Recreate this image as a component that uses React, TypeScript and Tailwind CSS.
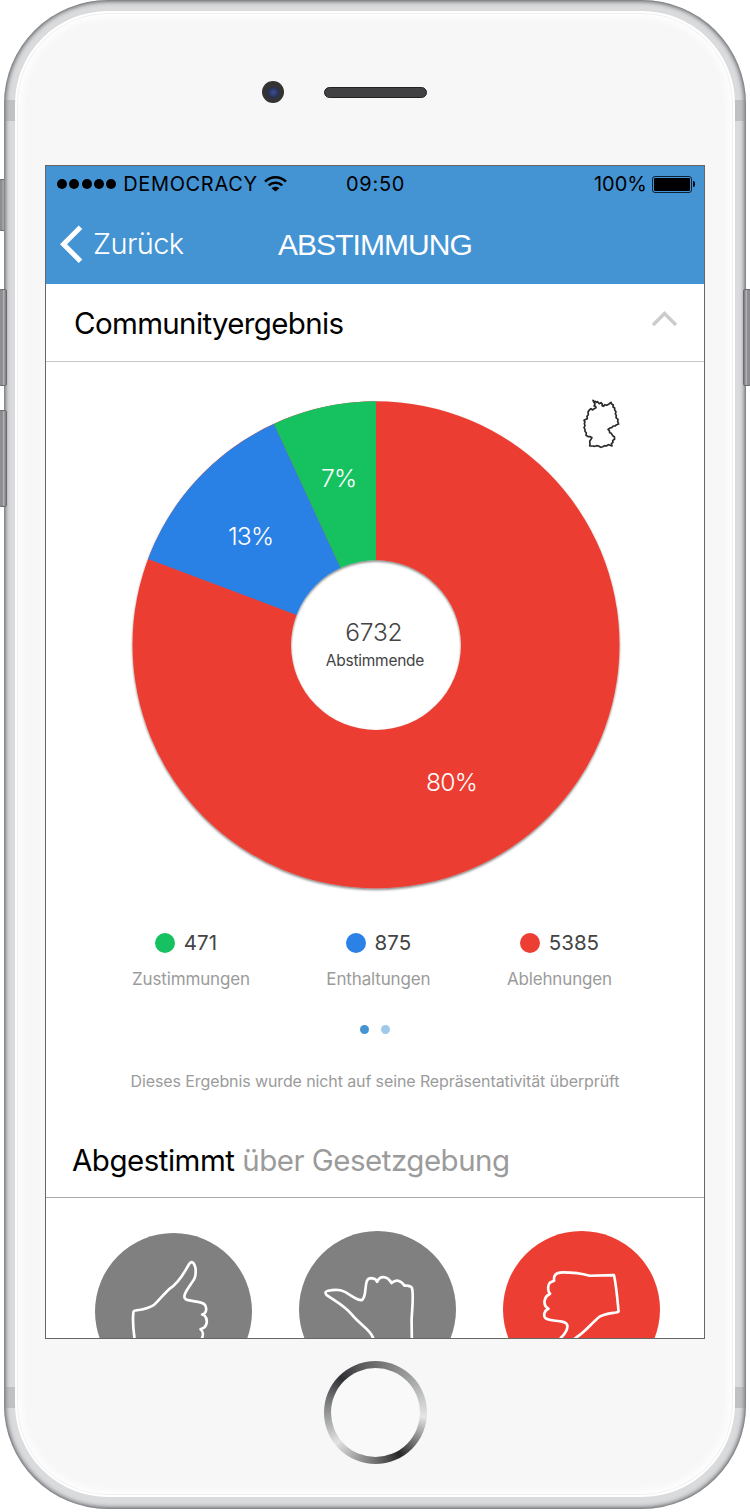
import type { ReactNode } from "react";

const GERMANY =
  "M99 62L101 67L105 65L110 68L113 66L118 72L123 69L127 73L126 78L131 80L134 75L140 77L147 73L153 68L155 73L160 76L159 82L164 85L164 91L168 96L166 102L169 108L168 114L174 119L173 126L176 133L170 135L165 139L160 139L155 144L150 145L144 149L148 153L149 159L154 161L158 168L163 171L164 178L158 183L159 188L154 192L156 199L150 197L145 195L139 199L134 198L128 201L122 203L116 199L110 198L104 200L97 199L89 199L90 192L89 185L93 179L96 174L91 171L85 171L78 167L79 160L75 155L75 149L72 144L75 138L73 131L75 127L72 122L78 119L82 117L81 110L85 105L84 97L88 91L93 87L98 91L101 88L108 84L107 80L102 79L105 73Z";

function StatusBar() {
  return (
    <div className="flex h-9 items-center pl-[11px] pr-[9px] text-[20px] leading-none text-black">
      <div className="flex w-[289px] items-center">
        <div className="flex gap-[2.3px]">
          {[0, 1, 2, 3, 4].map((i) => (
            <span key={i} className="size-[10px] rounded-full bg-black" />
          ))}
        </div>
        <span className="ml-[7px] font-[370] tracking-[0.65px]">DEMOCRACY</span>
        <svg className="ml-[6px] h-4 w-[23px]" viewBox="0 0 23 16" fill="none" stroke="#000" strokeWidth="2.5">
          <path d="M1 5.6C7 -.2 16 -.2 22 5.6" />
          <path d="M4.7 9.4C8.6 5.8 14.4 5.8 18.3 9.4" />
          <path d="M11.5 15.6L7.6 12.2C9.8 10.2 13.2 10.2 15.4 12.2Z" fill="#000" stroke="none" />
        </svg>
      </div>
      <span className="grow font-[370] tracking-[0.7px]">09:50</span>
      <span className="font-[370]">100%</span>
      <div className="ml-[5px] flex items-center">
        <div className="h-[17px] w-[40px] rounded-[3px] border border-[#0a2238] p-px">
          <div className="size-full rounded-[1px] bg-black" />
        </div>
        <div className="ml-px h-[6px] w-[2px] rounded-r-sm bg-black" />
      </div>
    </div>
  );
}

function NavBar() {
  return (
    <div className="flex h-[82px] items-center pl-[14px] text-[29px] leading-none text-white">
      <svg className="mt-[2px] h-[38px] w-6" viewBox="0 0 24 38" fill="none" stroke="#fff" strokeWidth="5">
        <path d="M20.5 2.2L3.5 19.2L20.5 36.2" />
      </svg>
      <span className="ml-[9px] mt-px w-[185px] font-[330] tracking-[-0.6px]">Zurück</span>
      <span className="mt-[3px] font-['Liberation_Sans',sans-serif] text-[30px] tracking-[-0.95px]">ABSTIMMUNG</span>
    </div>
  );
}

function PieChart() {
  return (
    <svg className="h-[500px] w-[500px] font-['Inter',sans-serif]" viewBox="126 395 500 500">
      <defs>
        <filter id="shade" x="-5%" y="-5%" width="110%" height="110%">
          <feDropShadow dx="0" dy="1.6" stdDeviation="1.3" floodColor="#000" floodOpacity="0.5" />
        </filter>
        <mask id="hole" maskUnits="userSpaceOnUse" x="126" y="395" width="500" height="500">
          <rect x="126" y="395" width="500" height="500" fill="#fff" />
          <circle cx="376" cy="645" r="85" fill="#000" />
        </mask>
      </defs>
      <g filter="url(#shade)">
        <g mask="url(#hole)">
          <circle cx="376" cy="644.8" r="243.5" fill="#ec3e32" />
          <path d="M376 645L376 401.3A243.5 243.5 0 0 0 273.8 424Z" fill="#17c161" />
          <path d="M376 645L273.8 424A243.5 243.5 0 0 0 148 559Z" fill="#2b81e5" />
        </g>
      </g>
      <g fill="#fff" fontSize="24.7" fontWeight="350" letterSpacing="-0.9" textAnchor="middle">
        <text x="338.6" y="486.6">7%</text>
        <text x="250.6" y="544.8">13%</text>
        <text x="451.5" y="790.8">80%</text>
      </g>
      <g fill="#444" textAnchor="middle">
        <text x="373.8" y="641.4" fontSize="24.5" fontWeight="350" letterSpacing="-0.2">6732</text>
        <text x="375" y="666" fontSize="15.5" letterSpacing="-0.25">Abstimmende</text>
      </g>
    </svg>
  );
}

type LegendProps = { color: string; value: string; label: string; shift?: string };

function Legend({ color, value, label, shift = "" }: LegendProps) {
  return (
    <div className="flex flex-col items-center">
      <div className={`flex h-6 items-center gap-[9px] text-[20.5px] leading-none text-[#444] ${shift}`}>
        <span className={`size-[20px] rounded-full ${color}`} />
        <span className="mt-px font-[370]">{value}</span>
      </div>
      <span className="mt-[14px] text-[17px] leading-5 tracking-[-0.15px] text-[#9b9b9b]">{label}</span>
    </div>
  );
}

type HandProps = { box: string; color: string; className?: string; children: ReactNode };

function Hand({ box, color, className = "", children }: HandProps) {
  return (
    <div className={`size-[157px] shrink-0 rounded-full ${color} ${className}`}>
      <svg className="size-full" viewBox={box} fill="none" stroke="#fff" strokeWidth="8" strokeLinecap="round" strokeLinejoin="round">
        {children}
      </svg>
    </div>
  );
}

function Screen() {
  return (
    <div className="flex h-[1174px] w-[660px] shrink-0 flex-col overflow-hidden border border-[#666] bg-white font-['Inter',sans-serif]">
      <header className="h-[118px] shrink-0 bg-[#4494d4]">
        <StatusBar />
        <NavBar />
      </header>
      <div className="flex h-[78px] shrink-0 items-center justify-between border-b border-[#c8c8c8] pl-7 pr-[26px]">
        <h2 className="mt-[2px] text-[29.5px] font-[370] leading-none tracking-[-0.65px] text-black">Communityergebnis</h2>
        <svg className="mb-2 h-[16px] w-[27px]" viewBox="0 0 27 16" fill="none" stroke="#ccc" strokeWidth="3.4">
          <path d="M2 14L13.5 2.5L25 14" />
        </svg>
      </div>
      <div className="relative flex shrink-0 justify-center pl-[2px] pt-[33px]">
        <PieChart />
        <svg className="absolute left-[534px] top-[35px] size-[54px]" viewBox="60 52 162 162" fill="none" stroke="#2a2a2a" strokeWidth="5" strokeLinejoin="round">
          <path d={GERMANY} />
        </svg>
      </div>
      <div className="mt-[36px] flex shrink-0 justify-between pl-[86px] pr-[92px]">
        <Legend color="bg-[#17c161]" value="471" label="Zustimmungen" shift="mr-[10px]" />
        <Legend color="bg-[#2b81e5]" value="875" label="Enthaltungen" />
        <Legend color="bg-[#ec3e32]" value="5385" label="Ablehnungen" />
      </div>
      <div className="mt-[36px] flex shrink-0 justify-center gap-3">
        <span className="size-[9px] rounded-full bg-[#4494d4]" />
        <span className="size-[9px] rounded-full bg-[#a0c9ea]" />
      </div>
      <p className="mt-[37px] shrink-0 text-center text-[16px] leading-[20px] tracking-[-0.11px] text-[#9b9b9b]">
        Dieses Ergebnis wurde nicht auf seine Repräsentativität überprüft
      </p>
      <div className="mt-[33px] flex h-[74px] shrink-0 items-center border-b border-[#aaa] pl-[26px]">
        <h2 className="mt-px text-[29.5px] font-[370] leading-none tracking-[-0.5px] text-black">
          Abgestimmt <span className="text-[#9b9b9b]">über Gesetzgebung</span>
        </h2>
      </div>
      <div className="flex shrink-0 justify-between pl-[49px] pr-[44px] pt-[33px]">
        <Hand box="47 39 470 470" color="bg-[#808080]" className="mt-[2px]">
          <path d="M166 380L165 352C162 330 159 300 162 276Q163 271 168 271C190 268 212 264 226 252C240 238 255 220 268 208C293 192 308 170 325 138Q331 126 337 126Q344 127 348 145Q350 170 342 180C334 193 322 207 316 222Q311 237 325 240C345 245 362 243 374 252C382 258 382 275 374 281L368 283L374 285C385 296 384 315 372 323L363 327C371 333 371 345 368 352L360 380" />
        </Hand>
        <Hand box="658 34 470 470" color="bg-[#808080]">
          <path d="M885 370L879 352C872 330 838 312 815 283C795 258 765 243 740 225Q733 216 745 213C775 206 792 212 810 225C825 235 838 242 846 241C860 232 854 205 861 184Q864 175 875 175Q888 176 892 186Q897 172 910 172Q925 172 935 190Q945 181 955 183Q966 186 974 198Q990 196 996 204C1002 225 997 260 995 300L996 370" />
        </Hand>
        <Hand box="385 94 470 470" color="bg-[#ec3e32]">
          <path d="M545 430L560 412C570 402 577 390 578 380Q578 370 565 366C545 361 525 364 512 355C505 347 508 333 521 327L513 320C505 307 510 289 526 282C518 275 518 255 526 248L538 243Q537 236 539 229Q544 218 565 218C600 218 630 224 645 228L717 226C722 245 726 280 731 335Q728 338 722 338C700 341 685 342 672 352C650 370 630 397 605 412L590 425" />
        </Hand>
      </div>
    </div>
  );
}

const leftButton =
  "absolute rounded-[2px] border border-[#6c6c70] bg-linear-to-r from-[#8e8e92] from-40% via-[#b4b4b8] via-60% to-[#77777b]";
const rightButton =
  "absolute rounded-[2px] border border-[#6c6c70] bg-linear-to-l from-[#8e8e92] from-40% via-[#b4b4b8] via-60% to-[#77777b]";

export default function App() {
  return (
    <div className="relative h-[1512px] w-[750px] overflow-hidden bg-white">
      <div className={`${leftButton} -left-px top-[179px] h-[52px] w-[7px]`} />
      <div className="relative ml-1 h-[1509px] w-[742px] overflow-hidden rounded-[104px] bg-[#d9dbdd] px-[11px] pt-[11px] shadow-[inset_0_0_5px_1px_#4a4a4d]">
        <div className="absolute left-px top-[100px] h-[21px] w-[740px] bg-[#8f9193]/35" />
        <div className="absolute left-px top-[1387px] h-[21px] w-[740px] bg-[#8f9193]/35" />
        <div className="relative flex h-[1486px] w-[720px] flex-col items-center rounded-[93px] border-2 border-white bg-[#f7f7f7] shadow-[inset_0_0_0_1px_#efefef,inset_0_0_9px_4px_#fff]">
          <div className="flex h-[152px] w-full shrink-0 items-center pl-[245px] pt-[6px]">
            <div className="flex size-[22px] items-center justify-center rounded-full bg-[#333]">
              <div className="size-[11px] rounded-full bg-radial from-[#3d4f8c] to-[#1b2346]" />
            </div>
            <div className="ml-[40px] h-[11px] w-[103px] rounded-full border border-[#222] bg-[#414143]" />
          </div>
          <Screen />
          <div className="mt-[22px] flex size-[103px] items-center justify-center rounded-full bg-[conic-gradient(from_0deg,#6d6d6d_0deg,#a0a2a1_45deg,#e4e6e5_95deg,#8f8f8f_120deg,#262626_150deg,#707070_180deg,#9a9a9a_200deg,#e2e2e2_232deg,#a3a5a5_262deg,#757678_285deg,#2e2f33_315deg,#58595b_340deg,#6d6d6d_360deg)]">
            <div className="size-[89px] rounded-full bg-[#f9f9f9]" />
          </div>
        </div>
      </div>
      <div className={`${leftButton} -left-px top-[289px] h-[97px] w-[8px]`} />
      <div className={`${leftButton} -left-px top-[410px] h-[97px] w-[8px]`} />
      <div className={`${rightButton} left-[743px] top-[289px] h-[97px] w-[8px]`} />
    </div>
  );
}
